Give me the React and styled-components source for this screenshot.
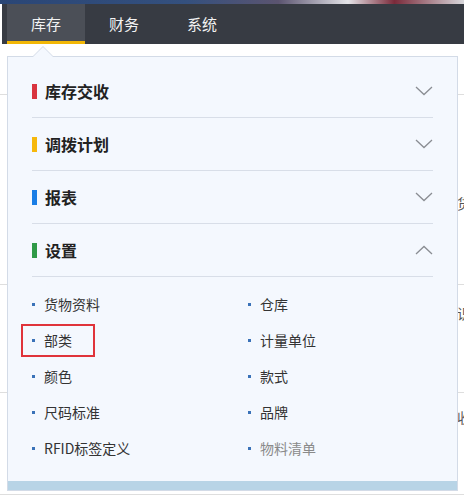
import React from "react";
import styled, { createGlobalStyle } from "styled-components";

const GlobalStyle = createGlobalStyle`
  html, body {
    margin: 0;
    padding: 0;
    background: #ffffff;
    font-family: "Noto Sans CJK SC", "Noto Sans", sans-serif;
  }
`;

const Page = styled.div`
  position: relative;
  width: 464px;
  height: 495px;
  overflow: hidden;
  background: #fff;
`;

const TopStrip = styled.div`
  height: 4px;
  background: linear-gradient(to right, #2a4676 0%, #34507e 40%, #5b5470 60%, #e4e4e8 75%, #7a2a3a 85%, #d8d8dc 100%);
`;

const NavBar = styled.div`
  display: flex;
  height: 40px;
  margin-left: 2px;
  padding-left: 5px;
  background: #373b43;
`;

const Tab = styled.div`
  width: 78px;
  display: flex;
  align-items: center;
  justify-content: center;
  font-size: 15px;
  color: #f2f2f2;
  box-sizing: border-box;
  background: ${(p) => (p.$active ? "#4b4f57" : "transparent")};
  border-bottom: 3px solid ${(p) => (p.$active ? "#f2b705" : "transparent")};
  padding-top: 2px;
`;

// faint rows of the page behind the dropdown
const BgRows = styled.div`
  display: flex;
  flex-direction: column;
`;

const BgRow = styled.div`
  height: ${(p) => p.$h}px;
  border-bottom: 1px solid #dedede;
  padding-left: 457px;
  box-sizing: border-box;
  padding-top: ${(p) => p.$pt}px;
  font-size: 14px;
  line-height: 16px;
  color: #555;
  white-space: nowrap;
`;

const Panel = styled.div`
  position: absolute;
  top: 56px;
  left: 7px;
  width: 451px;
  box-sizing: border-box;
  background: #f4f8fe;
  border: 1px solid #d3dbe7;
  padding-top: 8px;

  &::before,
  &::after {
    content: "";
    position: absolute;
    left: 24px;
    top: -11px;
    border-left: 11px solid transparent;
    border-right: 11px solid transparent;
    border-bottom: 11px solid #d3dbe7;
  }
  &::after {
    top: -10px;
    left: 25px;
    border-left-width: 10px;
    border-right-width: 10px;
    border-bottom: 10px solid #f4f8fe;
  }
`;

const Section = styled.div`
  padding: 0 24px;
`;

const Header = styled.div`
  display: flex;
  align-items: center;
  height: 34px;
  padding: 9px 0 9px;
  border-bottom: 1px solid #d8dee8;
`;

const Bar = styled.span`
  width: 5px;
  height: 15px;
  background: ${(p) => p.$color};
  margin-right: 8px;
`;

const Title = styled.span`
  flex: 1;
  font-size: 16px;
  font-weight: 700;
  color: #222;
`;

const Chevron = ({ up }) => (
  <svg width="18" height="10" viewBox="0 0 18 10">
    <path
      d={up ? "M1 9 L9 1.5 L17 9" : "M1 1 L9 8.5 L17 1"}
      fill="none"
      stroke="#8a8d93"
      strokeWidth="1.3"
    />
  </svg>
);

const Items = styled.div`
  display: grid;
  grid-template-columns: 216px 1fr;
  padding: 9px 0 15px;
`;

const Item = styled.div`
  position: relative;
  height: 36px;
  display: flex;
  align-items: center;
  font-size: 14px;
  color: ${(p) => (p.$muted ? "#8a8a8a" : "#333")};

  &::before {
    content: "";
    width: 3px;
    height: 3px;
    background: #3a72b8;
    margin-right: 9px;
  }

  ${(p) =>
    p.$marked &&
    `
    &::after {
      content: "";
      position: absolute;
      left: -11px;
      top: 2px;
      width: 74px;
      height: 33px;
      box-sizing: border-box;
      border: 2.5px solid #e0333a;
    }
  `}
`;

const BottomBar = styled.div`
  height: 9px;
  background: #b8d4e6;
`;

const sections = [
  { title: "库存交收", color: "#d9343f" },
  { title: "调拨计划", color: "#f6b80c" },
  { title: "报表", color: "#1a7ee6" },
  { title: "设置", color: "#2f9a48", open: true },
];

const items = [
  { label: "货物资料" },
  { label: "仓库" },
  { label: "部类", marked: true },
  { label: "计量单位" },
  { label: "颜色" },
  { label: "款式" },
  { label: "尺码标准" },
  { label: "品牌" },
  { label: "RFID标签定义" },
  { label: "物料清单", muted: true },
];

export default function App() {
  return (
    <Page>
      <GlobalStyle />
      <TopStrip />
      <NavBar>
        <Tab $active>库存</Tab>
        <Tab>财务</Tab>
        <Tab>系统</Tab>
      </NavBar>
      <BgRows>
        <BgRow $h={51} $pt={0} />
        <BgRow $h={190} $pt={100}>货</BgRow>
        <BgRow $h={108} $pt={20}>识</BgRow>
        <BgRow $h={102} $pt={16}>收</BgRow>
      </BgRows>
      <Panel>
        {sections.map((s) => (
          <Section key={s.title}>
            <Header>
              <Bar $color={s.color} />
              <Title>{s.title}</Title>
              <Chevron up={s.open} />
            </Header>
            {s.open && (
              <Items>
                {items.map((it) => (
                  <Item key={it.label} $marked={it.marked} $muted={it.muted}>
                    {it.label}
                  </Item>
                ))}
              </Items>
            )}
          </Section>
        ))}
        <BottomBar />
      </Panel>
    </Page>
  );
}
